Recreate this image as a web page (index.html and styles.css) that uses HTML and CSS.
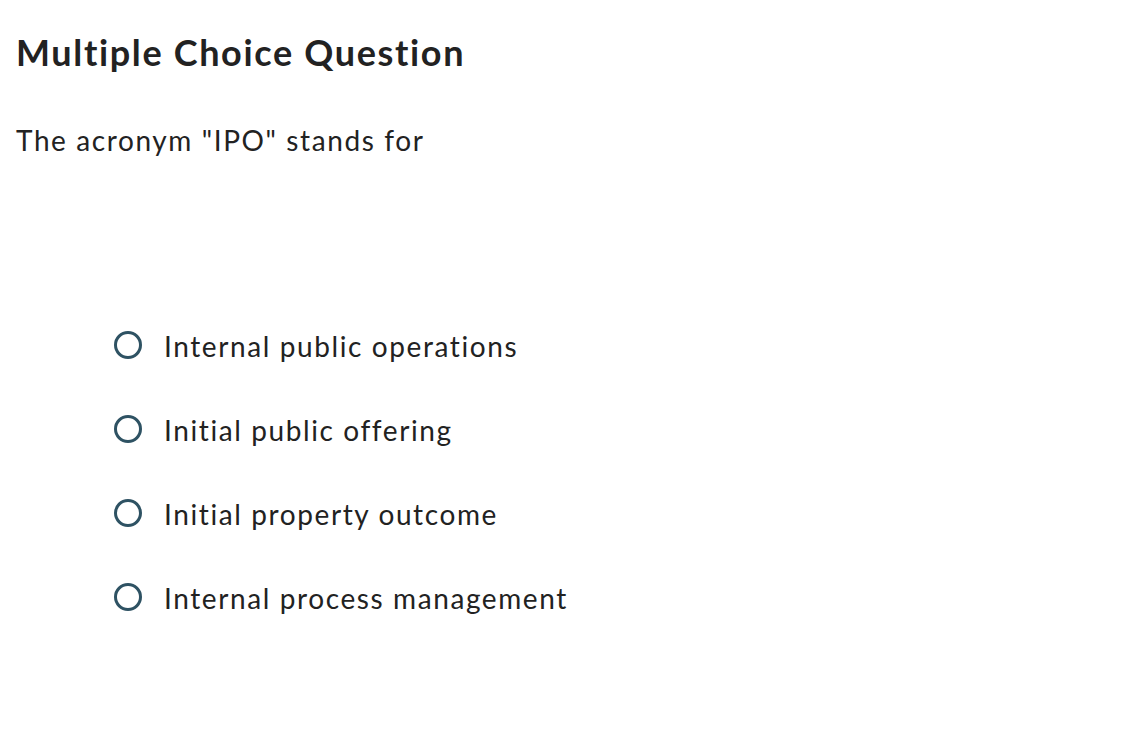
FILE: index.html
```html
<!DOCTYPE html>
<html>
<head>
<meta charset="utf-8">
<link rel="stylesheet" href="styles.css">
</head>
<body>
<div class="page">
  <h1 class="title">Multiple Choice Question</h1>
  <p class="prompt">The acronym "IPO" stands for</p>
  <ul class="options">
    <li class="option"><span class="radio"></span><span class="label">Internal public operations</span></li>
    <li class="option"><span class="radio"></span><span class="label">Initial public offering</span></li>
    <li class="option"><span class="radio"></span><span class="label">Initial property outcome</span></li>
    <li class="option"><span class="radio"></span><span class="label">Internal process management</span></li>
  </ul>
</div>
</body>
</html>
```
FILE: styles.css
```css
html, body {
  margin: 0;
  padding: 0;
  background: #ffffff;
}
.page {
  padding: 29px 16px 0 16px;
  font-family: "Lato", "Liberation Sans", sans-serif;
  color: #222222;
  font-variant-ligatures: none;
  font-feature-settings: "liga" 0;
}
.title {
  margin: 0;
  font-size: 36px;
  line-height: 46px;
  font-weight: 700;
  letter-spacing: 1.65px;
  color: #222222;
}
.prompt {
  margin: 47px 0 0 0;
  font-size: 28px;
  line-height: 36px;
  font-weight: 400;
  letter-spacing: 1.6px;
}
.options {
  list-style: none;
  margin: 170px 0 0 0;
  padding: 0 0 0 98px;
  display: flex;
  flex-direction: column;
  gap: 48px;
}
.option {
  display: flex;
  align-items: center;
  height: 36px;
}
.radio {
  box-sizing: border-box;
  width: 28px;
  height: 28px;
  border: 3.6px solid #2e5263;
  border-radius: 50%;
  margin-right: 22px;
  margin-top: -2px;
  flex: none;
}
.label {
  font-size: 28px;
  line-height: 36px;
  letter-spacing: 1.6px;
}
```
